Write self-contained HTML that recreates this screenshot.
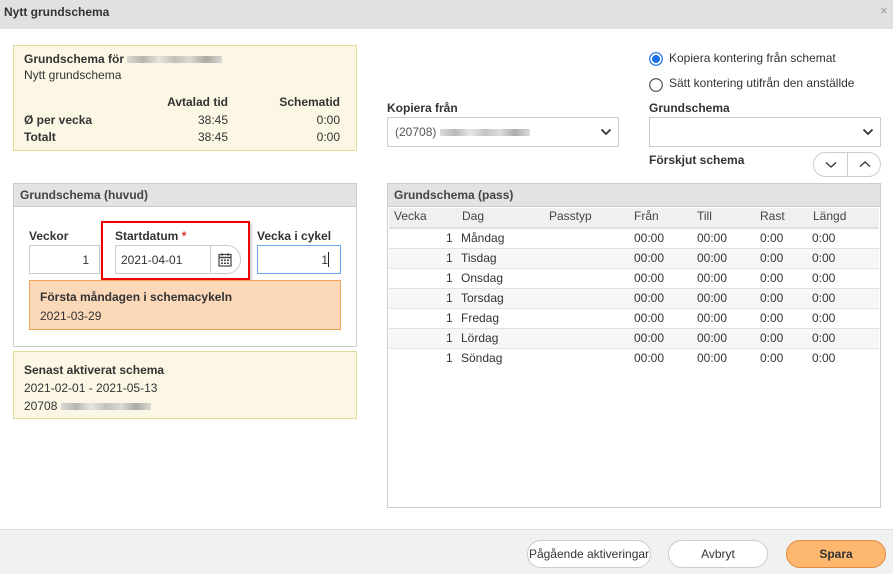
<!DOCTYPE html>
<html><head><meta charset="utf-8"><style>
*{box-sizing:border-box;margin:0;padding:0}
body{width:893px;height:574px;position:relative;overflow:hidden;background:#fff;font-family:"Liberation Sans Narrow","Liberation Sans",sans-serif;font-size:12px;color:#333}
.a{position:absolute}
.b{font-weight:bold}
.blur{display:inline-block;height:7px;background:linear-gradient(90deg,#ccc,#999,#ddd,#aaa,#ccc,#888,#ccc);opacity:.7;vertical-align:middle}
.yel{background:#fcf7e4;border:1px solid #e2dca0}
.panel{border:1px solid #ccc;background:#fff}
.ph{position:absolute;left:0;right:0;top:0;height:23px;background:#e3e3e3;border-bottom:1px solid #ccc;padding:4px 6px;font-weight:bold;color:#444}
.inp{position:absolute;border:1px solid #ccc;background:#fff;height:29px}
.btn{position:absolute;border:1px solid #ccc;border-radius:14px;background:#fff;text-align:center;line-height:26px;height:28px}
.r{text-align:right}
.row{position:absolute;left:0;right:0;height:20px;border-bottom:1px solid #e2e2e2;line-height:19px}
.row span{position:absolute}
</style></head><body>
<div class="a" style="left:0;top:0;width:893px;height:29px;background:#e1e1e1"></div>
<div class="a b" style="left:4px;top:5px;color:#333">Nytt grundschema</div>
<div class="a" style="left:880px;top:3px;color:#999;font-size:13px">×</div>

<div class="a yel" style="left:13px;top:45px;width:344px;height:106px"></div>
<div class="a b" style="left:24px;top:52px">Grundschema för <span class="blur" style="width:95px"></span></div>
<div class="a" style="left:24px;top:68px">Nytt grundschema</div>
<div class="a b r" style="left:150px;top:95px;width:78px">Avtalad tid</div>
<div class="a b r" style="left:260px;top:95px;width:80px">Schematid</div>
<div class="a b" style="left:24px;top:113px">Ø per vecka</div>
<div class="a r" style="left:150px;top:113px;width:78px">38:45</div>
<div class="a r" style="left:260px;top:113px;width:80px">0:00</div>
<div class="a b" style="left:24px;top:130px">Totalt</div>
<div class="a r" style="left:150px;top:130px;width:78px">38:45</div>
<div class="a r" style="left:260px;top:130px;width:80px">0:00</div>

<div class="a panel" style="left:13px;top:183px;width:344px;height:164px"><div class="ph">Grundschema (huvud)</div></div>
<div class="a b" style="left:29px;top:229px">Veckor</div>
<div class="inp" style="left:29px;top:245px;width:71px"><div class="a r" style="right:10px;top:7px">1</div></div>
<div class="a" style="left:101px;top:221px;width:149px;height:59px;border:2px solid #e00;box-shadow:1px 2px 3px rgba(0,0,0,.3)"></div>
<div class="a b" style="left:115px;top:229px">Startdatum <span style="color:#d33">*</span></div>
<div class="inp" style="left:115px;top:245px;width:126px;border-radius:0 14px 14px 0"><div class="a" style="left:5px;top:7px">2021-04-01</div><div class="a" style="left:94px;top:0;width:1px;height:27px;background:#ccc"></div>
<svg class="a" style="left:102px;top:6px" width="14" height="15" viewBox="0 0 14 15"><rect x="1" y="2.5" width="12" height="11.5" fill="none" stroke="#444" stroke-width="1.2"/><line x1="1" y1="5.5" x2="13" y2="5.5" stroke="#444" stroke-width="1.5"/><line x1="4" y1="1" x2="4" y2="4" stroke="#444"/><line x1="10" y1="1" x2="10" y2="4" stroke="#444"/><g fill="#444"><rect x="3" y="7.5" width="2" height="1.5"/><rect x="6" y="7.5" width="2" height="1.5"/><rect x="9" y="7.5" width="2" height="1.5"/><rect x="3" y="10.5" width="2" height="1.5"/><rect x="6" y="10.5" width="2" height="1.5"/><rect x="9" y="10.5" width="2" height="1.5"/></g></svg></div>
<div class="a b" style="left:257px;top:229px">Vecka i cykel</div>
<div class="inp" style="left:257px;top:245px;width:84px;border-color:#6aa8e8"><div class="a r" style="right:12px;top:7px">1</div><div class="a" style="right:11px;top:6px;width:1px;height:15px;background:#222"></div></div>
<div class="a" style="left:29px;top:280px;width:312px;height:50px;background:#fbd8b8;border:1px solid #efa255"></div>
<div class="a b" style="left:40px;top:290px">Första måndagen i schemacykeln</div>
<div class="a" style="left:40px;top:309px">2021-03-29</div>

<div class="a yel" style="left:13px;top:351px;width:344px;height:68px"></div>
<div class="a b" style="left:24px;top:363px">Senast aktiverat schema</div>
<div class="a" style="left:24px;top:381px">2021-02-01 - 2021-05-13</div>
<div class="a" style="left:24px;top:399px">20708 <span class="blur" style="width:90px"></span></div>

<svg class="a" style="left:649px;top:52px" width="14" height="14"><circle cx="7" cy="7" r="6.3" fill="#fff" stroke="#1a73e8" stroke-width="1.2"/><circle cx="7" cy="7" r="4" fill="#1a73e8"/></svg>
<div class="a" style="left:669px;top:51px">Kopiera kontering från schemat</div>
<svg class="a" style="left:649px;top:78px" width="14" height="14"><circle cx="7" cy="7" r="6.3" fill="#fff" stroke="#444" stroke-width="1.1"/></svg>
<div class="a" style="left:669px;top:76px">Sätt kontering utifrån den anställde</div>
<div class="a b" style="left:387px;top:101px">Kopiera från</div>
<div class="inp" style="left:387px;top:117px;width:232px;height:30px"><div class="a" style="left:7px;top:7px;color:#555">(20708) <span class="blur" style="width:90px"></span></div>
<svg class="a" style="right:6px;top:10px" width="12" height="8"><path d="M1.5 1.5 6 6 10.5 1.5" fill="none" stroke="#333" stroke-width="1.8"/></svg></div>
<div class="a b" style="left:649px;top:101px">Grundschema</div>
<div class="inp" style="left:649px;top:117px;width:232px;height:30px"><svg class="a" style="right:6px;top:10px" width="12" height="8"><path d="M1.5 1.5 6 6 10.5 1.5" fill="none" stroke="#333" stroke-width="1.8"/></svg></div>
<div class="a b" style="left:649px;top:153px">Förskjut schema</div>
<div class="a" style="left:813px;top:152px;width:68px;height:25px;border:1px solid #ccc;border-radius:13px;background:#fff"><div class="a" style="left:33px;top:0;width:1px;height:23px;background:#ccc"></div>
<svg class="a" style="left:11px;top:8px" width="12" height="8"><path d="M1 1.5 6 6 11 1.5" fill="none" stroke="#333" stroke-width="1.3"/></svg>
<svg class="a" style="left:45px;top:7px" width="12" height="8"><path d="M1 6.5 6 2 11 6.5" fill="none" stroke="#333" stroke-width="1.3"/></svg></div>

<div class="a panel" style="left:387px;top:183px;width:494px;height:325px"><div class="ph">Grundschema (pass)</div>
<div class="a" style="left:1px;right:1px;top:24px;height:21px;background:#f0f0f0;border-bottom:2px solid #e0e0e0;line-height:17px;color:#444">
<span class="a" style="left:5px">Vecka</span><span class="a" style="left:73px">Dag</span><span class="a" style="left:160px">Passtyp</span><span class="a" style="left:245px">Från</span><span class="a" style="left:308px">Till</span><span class="a" style="left:371px">Rast</span><span class="a" style="left:424px">Längd</span></div>
<div class="a" style="left:1px;right:1px;top:45px">
<div class="row" style="top:0;background:#fff"><span style="left:57px">1</span><span style="left:72px">Måndag</span><span style="left:245px">00:00</span><span style="left:308px">00:00</span><span style="left:371px">0:00</span><span style="left:423px">0:00</span></div>
<div class="row" style="top:20px;background:#f7f7f7"><span style="left:57px">1</span><span style="left:72px">Tisdag</span><span style="left:245px">00:00</span><span style="left:308px">00:00</span><span style="left:371px">0:00</span><span style="left:423px">0:00</span></div>
<div class="row" style="top:40px;background:#fff"><span style="left:57px">1</span><span style="left:72px">Onsdag</span><span style="left:245px">00:00</span><span style="left:308px">00:00</span><span style="left:371px">0:00</span><span style="left:423px">0:00</span></div>
<div class="row" style="top:60px;background:#f7f7f7"><span style="left:57px">1</span><span style="left:72px">Torsdag</span><span style="left:245px">00:00</span><span style="left:308px">00:00</span><span style="left:371px">0:00</span><span style="left:423px">0:00</span></div>
<div class="row" style="top:80px;background:#fff"><span style="left:57px">1</span><span style="left:72px">Fredag</span><span style="left:245px">00:00</span><span style="left:308px">00:00</span><span style="left:371px">0:00</span><span style="left:423px">0:00</span></div>
<div class="row" style="top:100px;background:#f7f7f7"><span style="left:57px">1</span><span style="left:72px">Lördag</span><span style="left:245px">00:00</span><span style="left:308px">00:00</span><span style="left:371px">0:00</span><span style="left:423px">0:00</span></div>
<div class="row" style="top:120px;background:#fff;border-bottom:none"><span style="left:57px">1</span><span style="left:72px">Söndag</span><span style="left:245px">00:00</span><span style="left:308px">00:00</span><span style="left:371px">0:00</span><span style="left:423px">0:00</span></div>
</div></div>

<div class="a" style="left:0;top:529px;width:893px;height:45px;background:#f1f1f1;border-top:1px solid #ddd"></div>
<div class="btn" style="left:527px;top:540px;width:124px">Pågående aktiveringar</div>
<div class="btn" style="left:668px;top:540px;width:100px">Avbryt</div>
<div class="btn b" style="left:786px;top:540px;width:100px;background:#fdb76f;border-color:#e38b3c">Spara</div>
</body></html>
